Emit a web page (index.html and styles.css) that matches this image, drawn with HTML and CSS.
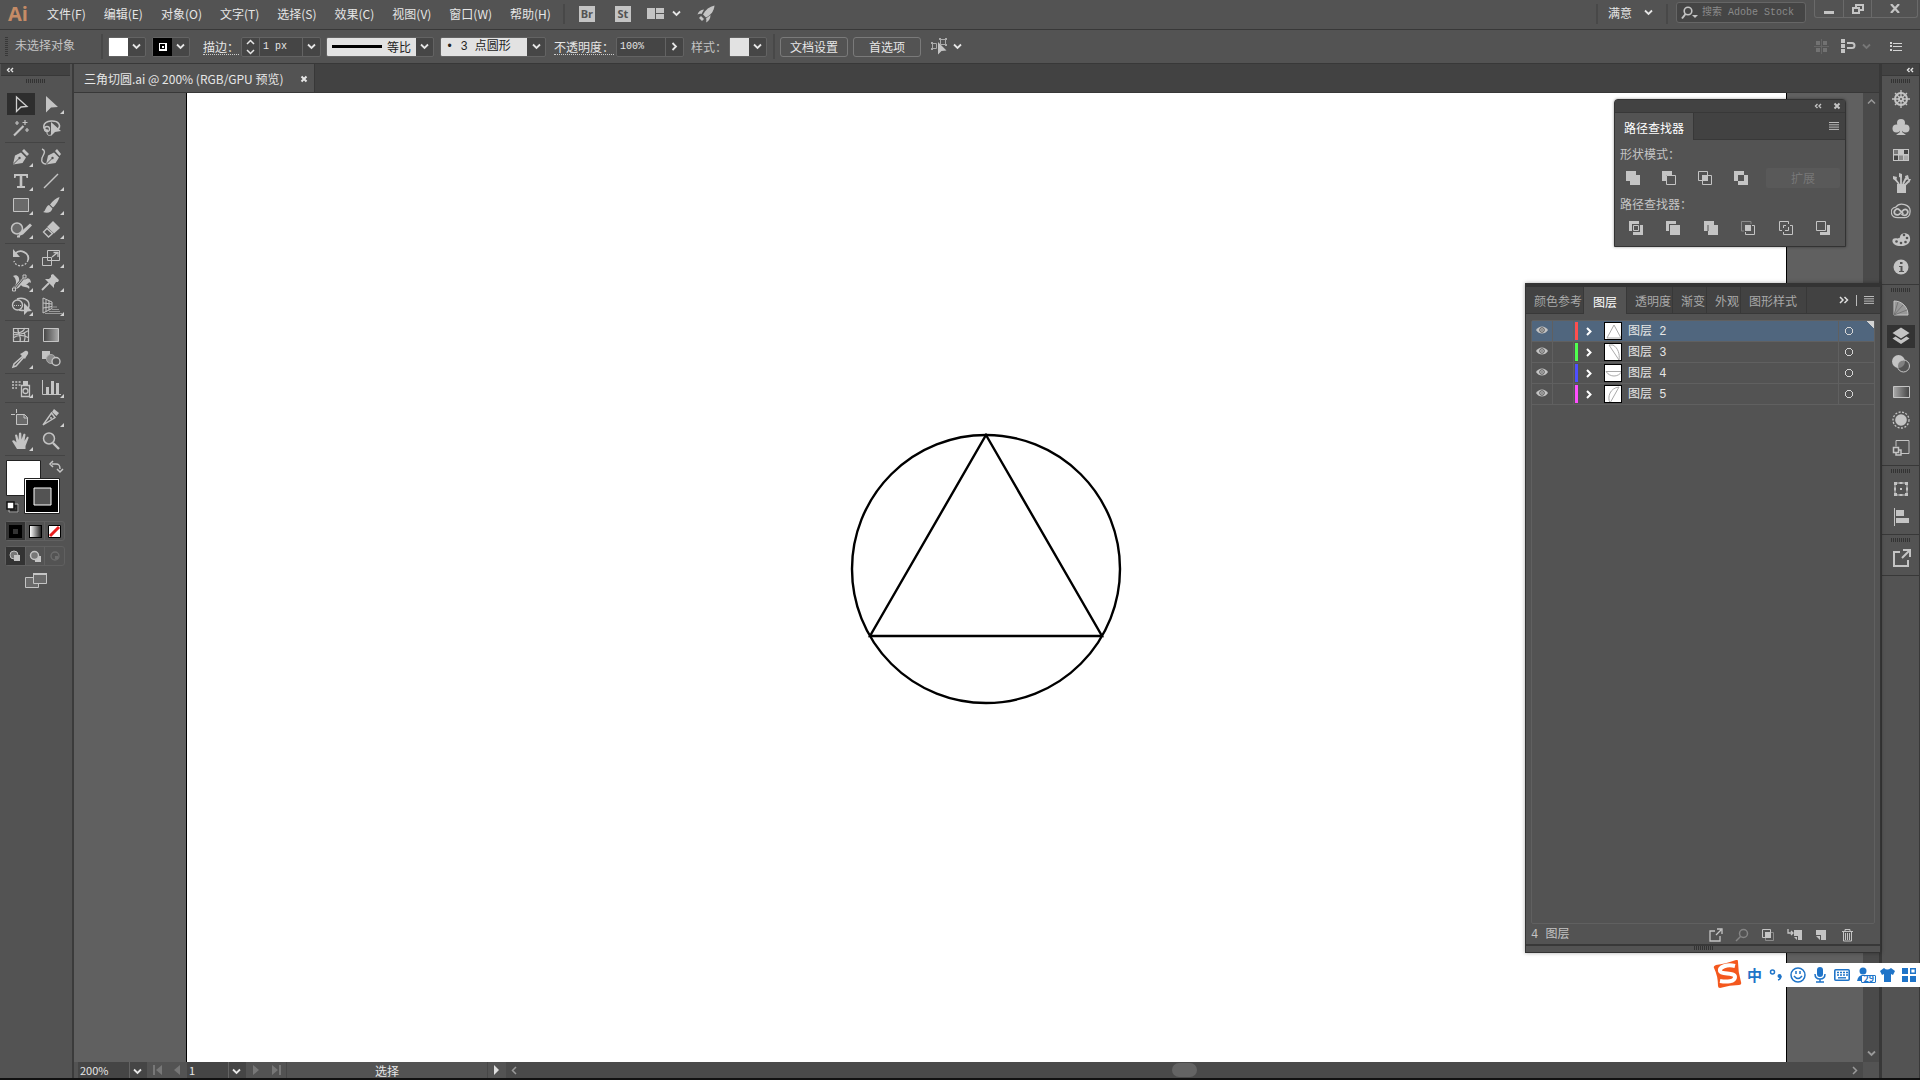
FILE: index.html
```html
<!DOCTYPE html>
<html lang="zh-CN">

<head>
    <meta charset="UTF-8">
    <meta name="viewport" content="width=device-width, initial-scale=1.0">
    <title>三角切圆.ai</title>
    <link rel="stylesheet" href="styles.css">
</head>

<body>
    <!-- shared icons -->
    <svg class="sprite" width="0" height="0">
        <symbol id="down" viewBox="0 0 9 7"><path d="M1 1.5l3.5 3.5L8 1.5" fill="none" stroke="currentColor" stroke-width="1.8"/></symbol>
        <symbol id="collapse" viewBox="0 0 8 6"><path d="M3.500 1L1.500 3l2 2M7 1L5 3l2 2" fill="none" stroke="currentColor" stroke-width="1.400"/></symbol>
        <symbol id="menu" viewBox="0 0 10 8"><path d="M0 .5h10M0 2.800h10M0 5.100h10M0 7.400h10" stroke="currentColor"/></symbol>
        <symbol id="close" viewBox="0 0 8 8"><path d="M1.500 1.500l5 5M6.500 1.500l-5 5" stroke="currentColor" stroke-width="2"/></symbol>
        <symbol id="eye" viewBox="0 0 12 8"><path d="M0 4C3-.8 9-.8 12 4 9 8.800 3 8.800 0 4z" fill="#c4c4c4"/><circle cx="6" cy="4" r="2.300" fill="#c4c4c4" stroke="#555"/><circle cx="6" cy="4" r=".8" fill="#555"/></symbol>
    </svg>

    <header class="menubar">
        <span class="logo">Ai</span>
        <nav class="menus">
            <button>文件(F)</button>
            <button>编辑(E)</button>
            <button>对象(O)</button>
            <button>文字(T)</button>
            <button>选择(S)</button>
            <button>效果(C)</button>
            <button>视图(V)</button>
            <button>窗口(W)</button>
            <button>帮助(H)</button>
        </nav>
        <span class="sep"></span>
        <div class="apps">
            <button class="app">Br</button>
            <button class="app">St</button>
            <button class="arrange" aria-label="排列文档">
                <svg width="17" height="11"><path d="M0 0h8v11H0zM9 0h8v5H9zM9 6h8v5H9z" fill="#c4c4c4"/></svg>
                <svg width="9" height="7"><use href="#down"/></svg>
            </button>
            <button aria-label="GPU 性能">
                <svg width="18" height="18" viewBox="0 0 18 18"><path d="M17.500.5c-5 1-9 4-11.500 9l3 3c5-2.500 8-6.500 8.500-12z" fill="#c4c4c4"/><path d="M7 4.500C3.500 5 1.500 6.500.5 9.500c1.500-.8 2.800-1 4-.5zM13.500 10c0 3.500-1.500 6-4.500 7.500.5-1.500.6-2.800 0-4zM4 11l3 3-2 2-3-3z" fill="#c4c4c4"/></svg>
            </button>
        </div>
        <div class="menubar-right">
            <span class="sep"></span>
            <button class="workspace-name">满意 <svg width="9" height="7"><use href="#down"/></svg></button>
            <span class="sep"></span>
            <label class="search">
                <svg width="18" height="14" viewBox="0 0 18 14"><circle cx="7" cy="5" r="3.800" fill="none" stroke="#c4c4c4" stroke-width="1.600"/><path d="M4.500 8L1 12.500" stroke="#c4c4c4" stroke-width="2"/><path d="M11 9h6l-3 3z" fill="#c4c4c4"/></svg>
                <input type="text" placeholder="搜索 Adobe Stock" aria-label="搜索 Adobe Stock">
            </label>
            <div class="window-buttons">
                <button aria-label="最小化"><svg width="10" height="12"><path d="M0 8h10v3H0z" fill="#c4c4c4"/></svg></button>
                <button aria-label="还原"><svg width="12" height="10" fill="none" stroke="#c4c4c4" stroke-width="2"><path d="M4 6V1h7v5H8"/><path d="M1 4h6v5H1z" fill="#535353"/></svg></button>
                <button aria-label="关闭"><svg width="10" height="9" viewBox="0 0 10 9"><path d="M1 0l8 9M9 0L1 9" stroke="#c4c4c4" stroke-width="2.200"/></svg></button>
            </div>
        </div>
    </header>

    <section class="controls">
        <span class="grip-v"></span>
        <span class="selection">未选择对象</span>
        <span class="sep"></span>
        <button class="swatch" aria-label="填色"><span class="chip white"></span><svg width="9" height="7"><use href="#down"/></svg></button>
        <button class="swatch" aria-label="描边颜色"><span class="chip black"></span><svg width="9" height="7"><use href="#down"/></svg></button>
        <label class="field-label dotted" for="weight">描边：</label>
        <div class="combo">
            <button class="spin" aria-label="增减"><svg width="9" height="16" fill="none" stroke="#e6e6e6" stroke-width="1.500"><path d="M1 5l3.500-3.500L8 5M1 11l3.500 3.500L8 11"/></svg></button>
            <input id="weight" class="weight" type="text" value="1 px">
            <button class="drop" aria-label="描边粗细"><svg width="9" height="7"><use href="#down"/></svg></button>
        </div>
        <select class="light profile" aria-label="宽度配置文件"><option>等比</option></select>
        <select class="light brush" aria-label="画笔定义"><option>• 3 点圆形</option></select>
        <label class="field-label dotted" for="opacity">不透明度：</label>
        <div class="combo">
            <input id="opacity" class="opacity" type="text" value="100%">
            <button class="drop" aria-label="不透明度滑块"><svg width="7" height="9" fill="none" stroke="#e6e6e6" stroke-width="1.800"><path d="M1.500 1L5 4.500 1.500 8"/></svg></button>
        </div>
        <span class="field-label">样式：</span>
        <button class="swatch" aria-label="图形样式"><span class="chip grey"></span><svg width="9" height="7"><use href="#down"/></svg></button>
        <span class="sep"></span>
        <button class="outline">文档设置</button>
        <button class="outline">首选项</button>
        <button class="similar" aria-label="选择类似的对象">
            <svg width="17" height="17" viewBox="0 0 17 17"><path d="M9.500 1.500h5v5h-5zM1.500 5.500h4v5h-4z" fill="none" stroke="#aaa"/><path d="M8 0h2v2H8zM14 0h2v2h-2zM14 6h2v2h-2zM0 4h2v2H0zM0 10h2v2H0z" fill="#aaa"/><path d="M7 4v12.500l3.500-3.500 5-.5z" fill="#c4c4c4"/></svg>
            <svg width="9" height="7"><use href="#down"/></svg>
        </button>
        <div class="controls-right">
            <svg width="15" height="15" fill="#727272"><path d="M2 2h4v4H2zM9 2h4v4H9zM2 9h4v4H2zM9 9h4v4H9z"/><path d="M7 0h1v15H7zM0 7h15v1H0z" fill="#666"/></svg>
            <svg width="15" height="15"><path d="M0 0h4v4H0zM0 5h4v4H0zM0 10h4v4H0z" fill="#c4c4c4"/><path d="M6 4h5a2.500 2.500 0 0 1 0 5H6" fill="none" stroke="#c4c4c4" stroke-width="2"/></svg>
            <svg class="dim" width="9" height="7"><use href="#down"/></svg>
            <svg class="list-icon" width="12" height="9"><path d="M0 0h2v2H0zM0 3h2v2H0zM0 7h2v2H0zM3 1h9v1H3zM3 4h9v1H3zM3 8h9v1H3z" fill="#d4d4d4"/></svg>
        </div>
    </section>

    <main class="workspace">
        <aside class="toolbar">
            <div class="dock-head left"><svg width="8" height="6"><use href="#collapse"/></svg></div>
            <span class="grip"></span>
            <div class="tools">
                <button class="tool active" aria-label="选择工具"><svg viewBox="0 0 31 24"><path d="M11.500 5v14.500l4.500-4.500 6-.5z" fill="none" stroke="#d0d0d0" stroke-width="1.300"/></svg></button>
                <button class="tool more" aria-label="直接选择工具"><svg viewBox="0 0 31 24"><path d="M10 4v16.500l5-5 7-.5z" fill="#c4c4c4"/></svg></button>
                <button class="tool" aria-label="魔棒工具"><svg viewBox="0 0 31 24"><path d="M9 19.500L18.500 10" stroke="#c4c4c4" stroke-width="2.200"/><path d="M12 5v4M10 7h4M20 4v5M17.500 6.500h5M22 12v4M20 14h4" stroke="#c4c4c4" stroke-width="1.200"/></svg></button>
                <button class="tool" aria-label="套索工具"><svg viewBox="0 0 31 24"><path d="M12 15c-6-2-6-9 3-10 8-.5 11 5 6 9" fill="none" stroke="#c4c4c4" stroke-width="1.600"/><circle cx="11" cy="13" r="2.500" fill="none" stroke="#c4c4c4" stroke-width="1.300"/><path d="M11 13v4c0 2 2 3 4 2" fill="none" stroke="#c4c4c4"/><path d="M15 6v14l4-4 6-1z" fill="#c4c4c4"/></svg></button>
                <hr>
                <button class="tool more" aria-label="钢笔工具"><svg viewBox="0 0 31 24"><path d="M8 19.500l2-9 6-3 5 5-3.500 5.500zM17 6l2-2 5 5-2 2z" fill="#c4c4c4"/><path d="M8 19.500l6-6" stroke="#535353"/><circle cx="14.500" cy="13" r="1.200" fill="#535353"/></svg></button>
                <button class="tool" aria-label="曲率工具"><svg viewBox="0 0 31 24"><path d="M10 19.500l2-9 6-3 5 5-3.500 5.500zM19 6l2-2 4 5-1.500 2z" fill="#c4c4c4"/><path d="M10 19.500l6-6" stroke="#535353"/><circle cx="16.500" cy="13" r="1.200" fill="#535353"/><path d="M6 4c5 2 1 6 0 9-1 4 1 6 4 6" fill="none" stroke="#c4c4c4" stroke-width="1.400"/></svg></button>
                <button class="tool more" aria-label="文字工具"><svg viewBox="0 0 31 24"><path d="M9 5h14v4h-1.500l-.5-2h-3.700v10H20v2h-8v-2h2.700V7H11l-.5 2H9z" fill="#c4c4c4"/></svg></button>
                <button class="tool more" aria-label="直线段工具"><svg viewBox="0 0 31 24"><path d="M8 19L22 5" stroke="#c4c4c4" stroke-width="1.500"/></svg></button>
                <button class="tool more" aria-label="矩形工具"><svg viewBox="0 0 31 24"><path d="M8.500 5.500h15v13h-15z" fill="#6a6a6a" stroke="#c4c4c4"/></svg></button>
                <button class="tool more" aria-label="画笔工具"><svg viewBox="0 0 31 24"><path d="M23.500 4c-3 1-7 4-9.500 7.500l3 3C20 12 23 7 23.500 4zM13 12l3.500 3.500c-1 4-5 5-9.500 3.500 3-1 2.500-6 6-7z" fill="#c4c4c4"/></svg></button>
                <button class="tool more" aria-label="Shaper 工具"><svg viewBox="0 0 31 24"><circle cx="12" cy="11.500" r="5.500" fill="#6a6a6a" stroke="#c4c4c4" stroke-width="1.500"/><path d="M25 6.500l2 2-9 9-5 2 2-4z" fill="#c4c4c4"/><path d="M12 19.500h3" stroke="#c4c4c4" stroke-width="2"/></svg></button>
                <button class="tool more" aria-label="橡皮擦工具"><svg viewBox="0 0 31 24"><path d="M17 4l7 7-6 5.500-7-6.500z" fill="#c4c4c4"/><path d="M11 11.500L7.500 15l5 5 4-3.500z" fill="none" stroke="#c4c4c4" stroke-width="1.400"/></svg></button>
                <hr>
                <button class="tool more" aria-label="旋转工具"><svg viewBox="0 0 31 24"><path d="M10 8c5-6 15-1 13 6" fill="none" stroke="#c4c4c4" stroke-width="1.800"/><path d="M8 3v8h7z" fill="#c4c4c4"/><path d="M23 14c-2 7-12 8-14 1" fill="none" stroke="#c4c4c4" stroke-width="1.400" stroke-dasharray="2 1.500"/></svg></button>
                <button class="tool more" aria-label="比例缩放工具"><svg viewBox="0 0 31 24"><path d="M11.500 4.500h12v10h-12zM6.500 11.500h9v8h-9z" fill="none" stroke="#c4c4c4"/><path d="M16 11l5-4M17.500 6.500H22V11" fill="none" stroke="#c4c4c4" stroke-width="1.300"/></svg></button>
                <button class="tool more" aria-label="宽度工具"><svg viewBox="0 0 31 24"><path d="M8 6c4-2 7 1 6 6 3-7 5-1 7-3 3-2 5 1 5 4-2-2-3 1-5 2 3 0 4 2 3 4-2-3-6-1-8-4-2 4-6 5-8 2 4-1 4-8 0-11z" fill="#c4c4c4"/><path d="M9 19L19 7" stroke="#535353" stroke-width="2.600"/><path d="M9 19L19 7" stroke="#c4c4c4"/><path d="M7.500 18h3v3h-3zM18 5h3v3h-3z" fill="#535353" stroke="#c4c4c4"/></svg></button>
                <button class="tool more" aria-label="操控变形工具"><svg viewBox="0 0 31 24"><path d="M15 5l2-1 6 6-1 2h-2l-2 3v3l-9-9h4l2-2z" fill="#c4c4c4"/><path d="M13 13l-7 7" stroke="#c4c4c4" stroke-width="1.800"/></svg></button>
                <button class="tool more" aria-label="形状生成器工具"><svg viewBox="0 0 31 24"><circle cx="12.500" cy="11" r="5" fill="none" stroke="#c4c4c4" stroke-width="1.400"/><path d="M12 5c5-2 12 0 12 6s-5 6-10 5" fill="none" stroke="#c4c4c4" stroke-width="1.400"/><path d="M9 11.500h10" stroke="#c4c4c4" stroke-dasharray="1 1"/><path d="M19 9v12l3.500-3.500 4.500-.5z" fill="#c4c4c4"/></svg></button>
                <button class="tool more" aria-label="透视网格工具"><svg viewBox="0 0 31 24"><path d="M7 4v15l9-4.500V8zM10 5.500v12M13 7v9M7 9l9 1M7 14l9-1.500" fill="none" stroke="#c4c4c4"/><path d="M17 13h4M16 15.500h7M13 17.500h11M9 19.500h17" stroke="#999"/></svg></button>
                <hr>
                <button class="tool" aria-label="网格工具"><svg viewBox="0 0 31 24"><path d="M8.500 5.500h15v13h-15zM8 9c6 2 10 0 12-4M8 15c6-4 11-3 16 0M13 5c-1 5 4 8 2 14M8 12l7-1c4 0 6-2 9-4M19 10c2 2 1 6 0 9" fill="none" stroke="#c4c4c4" stroke-width="1.200"/></svg></button>
                <button class="tool" aria-label="渐变工具"><svg viewBox="0 0 31 24"><defs><linearGradient id="fade"><stop offset="0" stop-color="#444"/><stop offset="1" stop-color="#aaa"/></linearGradient></defs><path d="M7.500 5.500h15v13h-15z" fill="url(#fade)" stroke="#c4c4c4"/></svg></button>
                <button class="tool more" aria-label="吸管工具"><svg viewBox="0 0 31 24"><path d="M18 9l-9 8-1 3 3-1 8-9" fill="none" stroke="#c4c4c4" stroke-width="1.500"/><path d="M15 7l2-1 3-2c2-1 4 1 3 3l-2 3-1 2z" fill="#c4c4c4"/></svg></button>
                <button class="tool" aria-label="混合工具"><svg viewBox="0 0 31 24"><path d="M6 4h8v8H6z" fill="#c4c4c4"/><circle cx="15" cy="12" r="4.500" fill="#8a8a8a" stroke="#aaa"/><circle cx="20" cy="14.500" r="4" fill="#535353" stroke="#c4c4c4" stroke-width="1.400"/></svg></button>
                <hr>
                <button class="tool more" aria-label="符号喷枪工具"><svg viewBox="0 0 31 24"><path d="M16.500 9.500h8v11h-8z" fill="none" stroke="#c4c4c4" stroke-width="1.300"/><path d="M18 5h5v4h-5z" fill="#c4c4c4"/><circle cx="20.500" cy="15" r="2.500" fill="none" stroke="#c4c4c4" stroke-width="1.300"/><path d="M7 6h9M7 9h9M7 12h5" stroke="#c4c4c4" stroke-width="1.600" stroke-dasharray="2 1.300"/></svg></button>
                <button class="tool more" aria-label="柱形图工具"><svg viewBox="0 0 31 24"><path d="M6.500 4v14.500H25" fill="none" stroke="#c4c4c4"/><path d="M10 11h3v7h-3zM15 5h3v13h-3zM20 7h3v11h-3z" fill="#c4c4c4"/></svg></button>
                <hr>
                <button class="tool" aria-label="画板工具"><svg viewBox="0 0 31 24"><path d="M11.500 9.500h8l3 3v7h-11z" fill="#6a6a6a" stroke="#c4c4c4"/><path d="M6 9.500h4M11.500 4v4M19 9v4h4" fill="none" stroke="#c4c4c4"/></svg></button>
                <button class="tool more" aria-label="切片工具"><svg viewBox="0 0 31 24"><path d="M18 4l5 4-2.500 3-4.500-4z" fill="#c4c4c4"/><path d="M15.500 8L7 20l12-7.500z" fill="none" stroke="#c4c4c4" stroke-width="1.400"/><circle cx="15" cy="13" r="1" fill="#c4c4c4"/></svg></button>
                <button class="tool more" aria-label="抓手工具"><svg viewBox="0 0 31 24"><path d="M12 20l-5-8c1-1 2-1 3 0l1.500 1.500L10 6c1-1 2-.5 2.300.5L13.500 11 14 4c1-1 2-.6 2.300.4l.2 6L18.500 5c1-.8 2-.2 2 .8L19.500 12l2.500-4c1-.5 1.900.1 1.500 1.200L20.500 17v3z" fill="#c4c4c4"/></svg></button>
                <button class="tool" aria-label="缩放工具"><svg viewBox="0 0 31 24"><circle cx="13" cy="9.500" r="5.500" fill="#626262" stroke="#c4c4c4" stroke-width="1.500"/><path d="M17 14l6 6" stroke="#c4c4c4" stroke-width="2.400"/></svg></button>
                <hr>
            </div>
            <svg class="fill-stroke" width="62" height="59" viewBox="0 0 62 59">
                <path d="M2.500 2.500h34v35h-34z" fill="#fff" stroke="#222"/>
                <path d="M20.500 20.500h35v35h-35z" fill="#fff" stroke="#222"/>
                <path d="M22 22h32v32H22z"/>
                <path d="M30 30h17v17H30z" fill="#535353" stroke="#fff"/>
                <path d="M48 6h4c3 0 4 1 4 5M49 3l-3 3 3 3M53 11l3 3 3-3" fill="none" stroke="#c4c4c4" stroke-width="1.500"/>
                <path d="M7 48h6v5H7z" fill="none" stroke="#222" stroke-width="3"/>
                <path d="M5 46h9v8H5z" fill="none" stroke="#aaa"/>
                <path d="M3 44h7v7H3z" fill="#fff" stroke="#111" stroke-width="1.500"/>
            </svg>
            <div class="modes">
                <button class="on" aria-label="颜色"><svg width="13" height="13"><path d="M2 2h9v9H2z" fill="#333" stroke="#000" stroke-width="4"/></svg></button>
                <button aria-label="渐变"><span class="mode-gradient"></span></button>
                <button aria-label="无"><svg width="13" height="13"><path d="M.5.5h12v12H.5z" fill="#fff" stroke="#000"/><path d="M2 11l9-9" stroke="#e81e1e" stroke-width="3"/></svg></button>
            </div>
            <div class="modes">
                <button class="on" aria-label="正常绘图"><svg width="12" height="12"><circle cx="5" cy="5" r="4" fill="#777" stroke="#c4c4c4"/><path d="M5 5h6v6H5z" fill="#c4c4c4"/></svg></button>
                <button aria-label="背面绘图"><svg width="12" height="12"><path d="M6 6h6v6H6z" fill="#c4c4c4"/><circle cx="5.500" cy="5.500" r="4" fill="#777" stroke="#c4c4c4" stroke-width="1.500"/></svg></button>
                <button aria-label="内部绘图"><svg width="12" height="12"><circle cx="6" cy="6" r="4" fill="none" stroke="#6d6d6d" stroke-width="1.300"/><path d="M6 6h3v3H6z" fill="#6d6d6d"/></svg></button>
            </div>
            <button class="screen-mode" aria-label="更改屏幕模式"><svg width="23" height="16"><path d="M.5 4.500h13v10H.5z" fill="#6a6a6a" stroke="#c4c4c4"/><path d="M8.500 1.500h13v9h-13z" fill="#6a6a6a" stroke="#c4c4c4"/><path d="M8 1h14" stroke="#c4c4c4" stroke-width="2"/></svg></button>
        </aside>

        <section class="document">
            <div class="tabs">
                <div class="tab">三角切圆.ai @ 200% (RGB/GPU 预览)<button aria-label="关闭文档"><svg width="8" height="8"><use href="#close"/></svg></button></div>
            </div>
            <div class="canvas">
                <div class="artboard">
                    <svg width="272" height="272" viewBox="0 0 272 272" fill="none" stroke="#000" stroke-width="2.400">
                        <circle cx="136" cy="136" r="134"/>
                        <path d="M136 2l116 201H20z"/>
                    </svg>
                </div>
                <div class="scroll-v">
                    <svg width="9" height="7" viewBox="0 0 9 7"><path d="M1 5.500L4.500 2 8 5.500" fill="none" stroke="#999" stroke-width="1.500"/></svg>
                    <svg class="scroll-down" width="9" height="7"><use href="#down"/></svg>
                </div>
            </div>
            <footer class="status">
                <select class="zoom" aria-label="缩放"><option>200%</option></select>
                <button class="nav" aria-label="首项"><svg width="9" height="10"><path d="M0 0h2v10H0zM9 0v10L3 5z"/></svg></button>
                <button class="nav" aria-label="上一项"><svg width="6" height="10"><path d="M6 0v10L0 5z"/></svg></button>
                <select class="page" aria-label="画板"><option>1</option></select>
                <button class="nav" aria-label="下一项"><svg width="6" height="10"><path d="M0 0v10l6-5z"/></svg></button>
                <button class="nav" aria-label="末项"><svg width="9" height="10"><path d="M7 0h2v10H7zM0 0v10l6-5z"/></svg></button>
                <span class="current-tool">选择</span>
                <button class="status-more" aria-label="显示"><svg width="6" height="10"><path d="M0 0v10l5-5z" fill="#ddd"/></svg></button>
                <div class="scroll-h">
                    <svg width="6" height="9" fill="none" stroke="#999" stroke-width="1.500"><path d="M5 1L1.500 4.500 5 8"/></svg>
                    <span class="thumb"></span>
                    <svg width="6" height="9" fill="none" stroke="#999" stroke-width="1.500"><path d="M1 1l3.500 3.500L1 8"/></svg>
                </div>
                <span class="corner"></span>
            </footer>
        </section>

        <aside class="dock">
            <div class="dock-head right"><svg width="8" height="6"><use href="#collapse"/></svg></div>
            <div class="dock-group">
                <span class="grip"></span>
                <button aria-label="颜色"><svg viewBox="0 0 20 20" fill="none" stroke="#c4c4c4"><circle cx="10" cy="10" r="6" stroke-width="2"/><circle cx="10" cy="10" r="2.500" fill="#c4c4c4"/><path d="M10 1v18M1 10h18M4 4l12 12M16 4L4 16" stroke-width="1.300"/><circle cx="10" cy="10" r="1" fill="#535353" stroke="none"/></svg></button>
                <button aria-label="符号"><svg viewBox="0 0 20 20" fill="#c4c4c4"><circle cx="10" cy="6" r="4"/><circle cx="5.500" cy="11.500" r="4"/><circle cx="14.500" cy="11.500" r="4"/><path d="M9 9h2v6l4 3H5l4-3z"/></svg></button>
                <button aria-label="色板"><svg viewBox="0 0 20 20"><path d="M2 4h16v12H2z" fill="#c4c4c4"/><path d="M3 5h4v4H3z" fill="#777"/><path d="M13 5h4v4h-4zM3 10.500h4V15H3z" fill="#444"/><path d="M8 10.500h4V15H8z" fill="#888"/><path d="M13 10.500h4V15h-4z" fill="#aaa"/></svg></button>
                <button aria-label="画笔"><svg viewBox="0 0 20 20" fill="#c4c4c4"><path d="M6 11h9v9H6z"/><path d="M8 11L4 6M10 11V4M12 11l3-6M14 12l4-4" stroke="#c4c4c4" stroke-width="1.800"/><path d="M2 3l4 1-1 4-3-2zM8 0l3 1v4L8 4zM14 3l3-1 1 4-3 1zM17 6h3l-2 4z"/></svg></button>
                <button aria-label="Creative Cloud"><svg viewBox="0 0 21 20" fill="none" stroke="#c4c4c4"><path d="M7 17C-1 17-2 7 5 6c4-6 16-3 15 5 0 4-3 6-6 6z" stroke-width="1.300"/><path d="M13 13L9 9c-3-3-7 1-5 4 2 2 5 1 6-1l3-3c3-2 6 1 4 4-1 2-4 2-6 0" stroke-width="1.800"/></svg></button>
                <button aria-label="颜色参考"><svg viewBox="0 0 20 20"><path d="M9 8c0-4 6-5 9-2 3 5 0 11-8 11-7 0-10-4-8-7 2-2 6 1 7-2z" fill="#c4c4c4"/><g fill="#535353"><circle cx="13" cy="6" r="1.300"/><circle cx="16" cy="9" r="1.300"/><circle cx="14.500" cy="13" r="1.300"/><circle cx="10" cy="14" r="1.300"/><circle cx="5.500" cy="12.500" r="1.300"/></g></svg></button>
                <button aria-label="信息"><svg viewBox="0 0 20 20"><circle cx="10" cy="10" r="7.500" fill="#c4c4c4"/><path d="M9 5h2.500v2H9zM8 9h3.500v5H13v1H8v-1h1.500v-4H8z" fill="#535353"/></svg></button>
            </div>
            <div class="dock-group">
                <span class="grip"></span>
                <button aria-label="颜色主题"><svg viewBox="0 0 20 20"><path d="M3 3c8 0 14 6 14 14H3z" fill="#999" stroke="#c4c4c4"/><path d="M3 17L7 4M3 17l9-10M3 17l13-5" stroke="#777"/></svg></button>
                <button class="on" aria-label="图层"><svg viewBox="0 0 20 20" fill="#c4c4c4"><path d="M10 1.500l8.500 5.500-8.500 5.500L1.500 7z"/><path d="M1.500 12.500L4.500 10.500l5.500 3.500 5.500-3.500 3 2-8.500 5.500z"/></svg></button>
                <button aria-label="透明度"><svg viewBox="0 0 20 20"><circle cx="7.500" cy="7.500" r="6.500" fill="#c4c4c4"/><circle cx="12.500" cy="12" r="6" fill="#555" fill-opacity=".6" stroke="#c4c4c4"/></svg></button>
                <button aria-label="渐变"><svg viewBox="0 0 20 20"><path d="M2.500 4.500h16v11h-16z" fill="url(#fade)" stroke="#c4c4c4" transform="matrix(-1 0 0 1 21 0)"/></svg></button>
                <button aria-label="外观"><svg viewBox="0 0 20 20"><circle cx="10" cy="10" r="5.800" fill="#c4c4c4"/><circle cx="10" cy="10" r="8" fill="none" stroke="#c4c4c4" stroke-width="1.300" stroke-dasharray="2 1.500"/></svg></button>
                <button aria-label="图形样式"><svg viewBox="0 0 20 20" fill="none" stroke="#c4c4c4"><path d="M5 8.500v-6h13v13h-8"/><path d="M2.500 9.500h5v5h-5zM8 12h2v5H5v-2" stroke-width="1.500"/></svg></button>
            </div>
            <div class="dock-group">
                <span class="grip"></span>
                <button aria-label="变换"><svg viewBox="0 0 20 20"><path d="M4 4h12v12H4z" fill="none" stroke="#c4c4c4"/><path d="M3 3h3v3H3zM14 3h3v3h-3zM3 14h3v3H3zM14 14h3v3h-3zM8.500 3h3v2h-3zM8.500 15h3v2h-3zM3 8.500h2v3H3zM15 8.500h2v3h-2zM9 9h2v2H9z" fill="#c4c4c4"/></svg></button>
                <button aria-label="对齐"><svg viewBox="0 0 20 20" fill="#c4c4c4"><path d="M3 1h1v18H3zM5 3h8v6H5zM5 11h13v5H5z"/></svg></button>
            </div>
            <div class="dock-group">
                <span class="grip"></span>
                <button aria-label="资源导出"><svg viewBox="0 0 20 20" fill="none" stroke="#c4c4c4" stroke-width="2"><path d="M9 4H3v14h14v-6M11 10l7-7M12 2h7v7"/></svg></button>
            </div>
        </aside>

        <!-- pathfinder panel -->
        <section class="panel pathfinder">
            <div class="panel-head"><svg width="8" height="6"><use href="#collapse"/></svg><svg width="8" height="8"><use href="#close"/></svg></div>
            <div class="panel-tabs">
                <button class="panel-tab active">路径查找器</button>
                <button class="panel-menu" aria-label="面板菜单"><svg width="10" height="8"><use href="#menu"/></svg></button>
            </div>
            <h2>形状模式：</h2>
            <div class="shape-modes">
                <button aria-label="联集"><svg width="14" height="14"><path d="M0 0h10v4h4v10H4v-4H0z" fill="#c4c4c4"/></svg></button>
                <button aria-label="减去顶层"><svg width="14" height="14"><path d="M0 0h10v4H4v6H0z" fill="#c4c4c4"/><path d="M4.500 4.500h9v9h-9z" fill="none" stroke="#c4c4c4"/></svg></button>
                <button aria-label="交集"><svg width="14" height="14"><path d="M.5.5h9v9h-9zM4.500 4.500h9v9h-9z" fill="none" stroke="#c4c4c4"/><path d="M4 4h6v6H4z" fill="#c4c4c4"/></svg></button>
                <button aria-label="差集"><svg width="14" height="14"><path d="M0 0h10v4h4v10H4v-4H0zM4 4v6h6V4z" fill="#c4c4c4" fill-rule="evenodd"/></svg></button>
                <button class="expand" disabled>扩展</button>
            </div>
            <h2>路径查找器：</h2>
            <div class="path-modes">
                <button aria-label="分割"><svg width="14" height="14"><path d="M0 0h10v3H3v7H0zM14 4v10H4v-3h7V4z" fill="#c4c4c4"/><path d="M4.500 4.500h5v5h-5z" fill="none" stroke="#c4c4c4"/></svg></button>
                <button aria-label="修边"><svg width="14" height="14"><path d="M0 0h10v3H3v7H0zM4 4h10v10H4z" fill="#c4c4c4"/></svg></button>
                <button aria-label="合并"><svg width="14" height="14"><path d="M0 0h10v4h4v10H4v-4H0z" fill="#c4c4c4"/><path d="M4 10V4" stroke="#535353"/></svg></button>
                <button aria-label="裁剪"><svg width="14" height="14"><path d="M10 3V.5H.5V10H3" fill="none" stroke="#8a8a8a"/><path d="M11 4.500h2.500v9h-9V11" fill="none" stroke="#c4c4c4"/><path d="M4 4h6v6H4z" fill="#c4c4c4"/></svg></button>
                <button aria-label="轮廓"><svg width="14" height="14" fill="none" stroke="#c4c4c4"><path d="M9.500 3V.5h-9v9H3M4.500 7V4.500H7M9.500 6v3.500H6M11 4.500h2.500v9h-9V11"/></svg></button>
                <button aria-label="减去后方对象"><svg width="14" height="14"><path d="M11 4h3v10H4v-3h7z" fill="#c4c4c4"/><path d="M.5.5h9v9h-9z" fill="none" stroke="#c4c4c4"/></svg></button>
            </div>
        </section>

        <!-- layers panel -->
        <section class="panel layers">
            <div class="panel-tabs">
                <button class="panel-tab">颜色参考</button>
                <button class="panel-tab active">图层</button>
                <button class="panel-tab">透明度</button>
                <button class="panel-tab">渐变</button>
                <button class="panel-tab">外观</button>
                <button class="panel-tab last">图形样式</button>
                <div class="panel-menu split">
                    <svg width="10" height="8" fill="none" stroke="#ddd" stroke-width="1.500"><path d="M1 1l3 3-3 3M5.500 1l3 3-3 3"/></svg>
                    <span class="bar"></span>
                    <svg width="10" height="8"><use href="#menu"/></svg>
                </div>
            </div>
            <ul class="layer-list">
                <li class="layer selected">
                    <span class="cell"><svg width="12" height="8"><use href="#eye"/></svg></span><span class="cell"></span><span class="color red"></span>
                    <svg class="open" width="6" height="9"><path d="M1 1l3.500 3.500L1 8"/></svg>
                    <svg class="thumbnail" width="18" height="18"><path d="M9 2l7 13H2z"/></svg>
                    <span class="name">图层 2</span><span class="target"></span>
                </li>
                <li class="layer">
                    <span class="cell"><svg width="12" height="8"><use href="#eye"/></svg></span><span class="cell"></span><span class="color green"></span>
                    <svg class="open" width="6" height="9"><path d="M1 1l3.500 3.500L1 8"/></svg>
                    <svg class="thumbnail" width="18" height="18"><path d="M4 1l10 15c1-6-1-12-6-15z"/></svg>
                    <span class="name">图层 3</span><span class="target"></span>
                </li>
                <li class="layer">
                    <span class="cell"><svg width="12" height="8"><use href="#eye"/></svg></span><span class="cell"></span><span class="color blue"></span>
                    <svg class="open" width="6" height="9"><path d="M1 1l3.500 3.500L1 8"/></svg>
                    <svg class="thumbnail" width="18" height="18"><path d="M1 6.500h16c-4 6-12 6-16 0z"/></svg>
                    <span class="name">图层 4</span><span class="target"></span>
                </li>
                <li class="layer">
                    <span class="cell"><svg width="12" height="8"><use href="#eye"/></svg></span><span class="cell"></span><span class="color pink"></span>
                    <svg class="open" width="6" height="9"><path d="M1 1l3.500 3.500L1 8"/></svg>
                    <svg class="thumbnail" width="18" height="18"><path d="M14 1L5 17C2 11 5 2 14 1z"/></svg>
                    <span class="name">图层 5</span><span class="target"></span>
                </li>
            </ul>
            <div class="layer-foot">
                <span>4 图层</span>
                <div class="layer-actions">
                    <button aria-label="收集以导出"><svg width="14" height="14" fill="none" stroke="#c4c4c4" stroke-width="1.300"><path d="M6 3H1v10h10V8M7 7l5-5M8 1h5v5"/></svg></button>
                    <button aria-label="定位对象"><svg width="14" height="14" fill="none" stroke="#858585" stroke-width="1.500"><circle cx="8.500" cy="5.500" r="4"/><path d="M5.500 8.500L1 13"/></svg></button>
                    <button aria-label="建立剪切蒙版"><svg width="14" height="14"><path d="M4.500 4.500h8v8h-8z" fill="none" stroke="#8a8a8a"/><path d="M1.500 1.500h8v8h-8z" fill="none" stroke="#c4c4c4"/><path d="M4 4h6v6H4z" fill="#c4c4c4"/></svg></button>
                    <button aria-label="创建新子图层"><svg width="15" height="14"><path d="M1 1v4h5M4 3l2 2-2 2" fill="none" stroke="#c4c4c4" stroke-width="1.300"/><path d="M7 2h8v10h-4V8H7zM7 9h3v3z" fill="#c4c4c4"/></svg></button>
                    <button aria-label="创建新图层"><svg width="14" height="14"><path d="M2 2h10v10H7V7H2zM2 8h4v4z" fill="#c4c4c4"/></svg></button>
                    <button aria-label="删除所选图层"><svg width="14" height="14" fill="none" stroke="#c4c4c4"><path d="M2 3.500h11M5 3V1.500h5V3M3.500 4v9h8V4M5.500 5v7M7.500 5v7M9.500 5v7"/></svg></button>
                </div>
            </div>
            <div class="resize"><span class="grip"></span></div>
        </section>

        <!-- input method bar -->
        <div class="ime">
            <svg class="ime-logo" width="29" height="28" viewBox="0 0 29 28"><path d="M3 5Q12 4 23 0q2-1 2 2 0 10 3 20 1 3-2 3-9 0-19 3-2 0-2-2Q5 16 1 8q-1-2 2-3z" fill="#f4581e"/><path d="M22 6C14 4 6 7 7 11s15 1 15 6-9 5-15 4" fill="none" stroke="#fff" stroke-width="4"/></svg>
            <button class="ime-lang">中</button>
            <button aria-label="标点"><svg width="14" height="14"><circle cx="3.500" cy="4" r="2" fill="none" stroke="#1f74c8" stroke-width="1.500"/><circle cx="10.500" cy="8" r="2" fill="#1f74c8"/><path d="M12 8q0 3-3 4" fill="none" stroke="#1f74c8" stroke-width="1.500"/></svg></button>
            <button aria-label="表情"><svg width="16" height="16" fill="none" stroke="#1f74c8" stroke-width="1.500"><circle cx="8" cy="8" r="7"/><path d="M4 9q4 5 8 0M6 4v3M10 4v3"/></svg></button>
            <button aria-label="语音"><svg width="14" height="16"><rect x="4" width="6" height="10" rx="3" fill="#1f74c8"/><path d="M2 7q0 5 5 5t5-5M7 12v3M3 15h8" fill="none" stroke="#1f74c8" stroke-width="1.500"/></svg></button>
            <button aria-label="软键盘"><svg width="16" height="14"><rect x=".8" y="1.800" width="14.400" height="10.400" rx="1" fill="#fff" stroke="#1f74c8" stroke-width="1.600"/><path d="M3 4.500h11M3 7h11" stroke="#1f74c8" stroke-width="1.600" stroke-dasharray="2 1"/><path d="M4 9.800h8" stroke="#1f74c8" stroke-width="1.400"/></svg></button>
            <button class="ime-user" aria-label="账户"><svg width="16" height="16" fill="#1f74c8"><circle cx="6" cy="4" r="3.500"/><path d="M0 14q1-6 6-6t6 6z"/></svg><span class="ime-badge">29</span></button>
            <button aria-label="皮肤"><svg width="15" height="14"><path d="M4 0q3 3 7 0l4 3-2 4-2-1v8H4V6L2 7 0 3z" fill="#1f74c8"/></svg></button>
            <button aria-label="工具箱"><svg width="14" height="14" fill="#1f74c8"><path d="M0 0h6v6H0zM0 8h6v6H0zM8 8h6v6H8z"/><path d="M8.700.7h4.600v4.600H8.700z" fill="none" stroke="#1f74c8" stroke-width="1.400"/></svg></button>
        </div>
    </main>
</body>

</html>
```

FILE: styles.css
```css
* {
    box-sizing: border-box;
}

body {
    margin: 0;
    height: 100vh;
    display: flex;
    flex-direction: column;
    overflow: hidden;
    background: #535353;
    border-bottom: 2px solid #111;
    color: #e6e6e6;
    font: 12px/16px "Noto Sans CJK SC", sans-serif;
}

.sprite {
    position: absolute;
}

svg {
    display: block;
    flex: none;
}

button,
input,
select {
    margin: 0;
    padding: 0;
    border: 0;
    background: none;
    color: inherit;
    font: inherit;
    border-radius: 0;
}

button {
    flex: none;
    display: flex;
    align-items: center;
    justify-content: center;
}

select {
    appearance: none;
}

.sep {
    width: 2px;
    height: 20px;
    background: #484848;
}

/* menu bar */
.menubar {
    flex: none;
    height: 30px;
    display: flex;
    align-items: center;
    padding: 0 0 2px 8px;
    border-bottom: 1px solid #383838;
}

.logo {
    width: 39px;
    color: #c58b66;
    font: bold 20px/24px "Open Sans", sans-serif;
}

.menus {
    display: flex;
    gap: 18px;
    margin-right: 12px;
}

.apps {
    display: flex;
    align-items: center;
    margin-left: 14px;
}

.app {
    width: 16px;
    height: 16px;
    margin-right: 20px;
    background: #c4c4c4;
    color: #535353;
    font: bold 11px/16px "Open Sans", sans-serif;
}

.arrange {
    gap: 8px;
    margin: 0 16px 0 -4px;
}

.menubar-right {
    display: flex;
    align-items: center;
    align-self: stretch;
    margin-left: auto;
}

.workspace-name {
    gap: 12px;
    margin: 0 13px 2px 10px;
}

.search {
    display: flex;
    align-items: center;
    width: 130px;
    height: 21px;
    margin: 0 8px 2px;
    padding-left: 4px;
    background: #454545;
    border: 1px solid #666;
    border-radius: 3px;
}

.search input {
    width: 100px;
    margin-left: 3px;
    font: 10px/16px "Liberation Mono", "Noto Sans CJK SC", monospace;
}

.search input::placeholder {
    color: #8a8a8a;
}

.window-buttons {
    display: flex;
    align-self: flex-start;
    height: 18px;
    margin-right: 2px;
    border: 1px solid #6a6a6a;
    border-top: 0;
    border-radius: 0 0 3px 3px;
}

.window-buttons button {
    width: 28px;
}

.window-buttons button + button {
    border-left: 1px solid #6a6a6a;
}

.window-buttons button:last-child {
    width: 46px;
}

/* control bar */
.controls {
    flex: none;
    height: 34px;
    display: flex;
    align-items: center;
    padding-left: 5px;
    border-bottom: 1px solid #383838;
}

.controls > .sep {
    height: 25px;
    margin-right: 5px;
}

.grip-v {
    width: 3px;
    height: 19px;
    background: repeating-linear-gradient(#383838 0 1px, transparent 1px 2px);
}

.selection {
    width: 86px;
    margin: 0 0 3px 7px;
    color: #c4c4c4;
}

.swatch {
    height: 20px;
    width: 38px;
    margin-right: 6px;
    justify-content: flex-start;
    gap: 4px;
    background: #464646;
    border: 1px solid #636363;
    border-radius: 2px;
}

.chip {
    width: 19px;
    height: 18px;
}

.white {
    background: #fff;
}

.grey {
    background: #e2e2e2;
}

.black {
    background: linear-gradient(#fff, #fff) center / 2px 2px no-repeat, linear-gradient(#000, #000) center / 5px 5px no-repeat, linear-gradient(#fff, #fff) center / 8px 8px no-repeat, #000;
}

.field-label {
    flex: none;
    height: 16px;
    margin: 0 2px;
    color: #c4c4c4;
    overflow: hidden;
}

.swatch + .field-label {
    margin-left: 7px;
}

.field-label.dotted {
    color: #e6e6e6;
    border-bottom: 1px dotted #ccc;
}

.combo {
    display: flex;
    height: 20px;
    margin-right: 5px;
    background: #454545;
    border: 1px solid #636363;
    border-radius: 2px;
}

.combo input {
    padding-left: 3px;
    border-right: 1px solid #636363;
    font: 10px/16px "Liberation Mono", monospace;
}

.spin {
    width: 18px;
    border-right: 1px solid #636363;
}

.drop {
    width: 17px;
}

.weight {
    width: 43px;
}

.opacity {
    width: 49px;
}

.light {
    height: 20px;
    margin-right: 6px;
    border: 1px solid #636363;
    border-radius: 2px;
    color: #222;
    background-color: #464646;
}

.profile {
    width: 108px;
    padding-left: 60px;
    background: url("data:image/svg+xml,%3Csvg xmlns='http://www.w3.org/2000/svg' width='9' height='7'%3E%3Cpath d='M1 1.500l3.500 3.500L8 1.500' fill='none' stroke='%23e6e6e6' stroke-width='1.800'/%3E%3C/svg%3E") right 4px center no-repeat, linear-gradient(#000, #000) 5px center / 50px 3px no-repeat, linear-gradient(90deg, #e2e2e2 89px, #464646 89px);
}

.brush {
    width: 106px;
    padding-left: 5px;
    background: url("data:image/svg+xml,%3Csvg xmlns='http://www.w3.org/2000/svg' width='9' height='7'%3E%3Cpath d='M1 1.500l3.500 3.500L8 1.500' fill='none' stroke='%23e6e6e6' stroke-width='1.800'/%3E%3C/svg%3E") right 4px center no-repeat, linear-gradient(90deg, #e2e2e2 86px, #464646 86px);
    font-family: "Liberation Mono", "Noto Sans CJK SC", monospace;
}

.outline {
    width: 68px;
    height: 20px;
    margin-right: 5px;
    border: 1px solid #7a7a7a;
    border-radius: 3px;
}

.similar {
    gap: 5px;
    margin-left: 5px;
}

.controls-right {
    display: flex;
    align-items: center;
    gap: 12px;
    margin: 0 18px 0 auto;
}

.controls-right .dim {
    margin-left: -6px;
    color: #777;
}

.list-icon {
    margin-left: 7px;
}

/* workspace */
.workspace {
    position: relative;
    flex: 1;
    min-height: 0;
    display: flex;
}

.toolbar {
    flex: none;
    width: 74px;
    padding: 0 2px 0 1px;
    border-right: 2px solid #3b3b3b;
}

.dock-head {
    height: 12px;
    display: flex;
    align-items: center;
    padding: 0 5px;
    background: #424242;
    border-bottom: 1px solid #383838;
}

.dock-head.right {
    justify-content: flex-end;
}

.grip {
    display: block;
    width: 19px;
    height: 4px;
    margin: 3px auto 2px;
    background: repeating-linear-gradient(90deg, #333 0 1px, transparent 1px 2px);
}

.tools {
    display: grid;
    grid-template-columns: 31px 31px;
    margin: 9px 0 0 4px;
}

.tools hr {
    grid-column: span 2;
    width: 60px;
    height: 1px;
    margin: 2px 0;
    border: 0;
    background: #444;
}

.tool {
    position: relative;
    height: 24px;
}

.tool svg {
    width: 31px;
    height: 24px;
}

.tool.active {
    background: linear-gradient(#2e2e2e, #2e2e2e) center / 28px 22px no-repeat;
}

.tool.more::after {
    content: "";
    position: absolute;
    right: 3px;
    bottom: 2px;
    width: 4px;
    height: 4px;
    background: #d0d0d0;
    clip-path: polygon(100% 0, 100% 100%, 0 100%);
}

.fill-stroke {
    margin: 0 0 4px 3px;
}

.modes {
    display: flex;
    width: 60px;
    height: 20px;
    margin: 0 0 5px 4px;
    border: 1px solid #606060;
    border-radius: 3px;
}

.modes button {
    flex: 1;
}

.modes button + button {
    border-left: 1px solid #606060;
}

.modes .on {
    background: #333;
}

.mode-gradient {
    width: 13px;
    height: 13px;
    border: 1px solid #000;
    background: linear-gradient(90deg, #fff, #222);
}

.screen-mode {
    margin: 7px 0 0 24px;
}

/* document window */
.document {
    flex: 1;
    min-width: 0;
    display: flex;
    flex-direction: column;
}

.tabs {
    flex: none;
    height: 29px;
    display: flex;
    background: #424242;
    border-bottom: 1px solid #383838;
}

.tab {
    display: flex;
    align-items: center;
    gap: 16px;
    padding: 2px 6px 0 10px;
    background: #535353;
    border-right: 1px solid #383838;
}

.canvas {
    flex: 1;
    min-height: 0;
    display: flex;
    background: #606060;
}

.artboard {
    flex: 1;
    display: flex;
    align-items: center;
    justify-content: center;
    margin: 0 76px 0 112px;
    padding: 0 2px 18px 0;
    background: #fff;
    border: solid #000;
    border-width: 0 1px;
}

.scroll-v {
    width: 16px;
    display: flex;
    flex-direction: column;
    justify-content: space-between;
    align-items: center;
    padding: 5px 0;
    background: #4a4a4a;
}

.scroll-down {
    color: #999;
}

.status {
    flex: none;
    height: 16px;
    display: flex;
    align-items: center;
    padding-left: 4px;
    line-height: 14px;
}

.status select {
    align-self: stretch;
    padding-left: 2px;
    background: url("data:image/svg+xml,%3Csvg xmlns='http://www.w3.org/2000/svg' width='9' height='7'%3E%3Cpath d='M1 1.500l3.500 3.500L8 1.500' fill='none' stroke='%23e6e6e6' stroke-width='1.800'/%3E%3C/svg%3E") right 5px bottom 3px no-repeat, linear-gradient(#636363, #636363) right 17px center / 1px 100% no-repeat #454545;
    font-size: 11px;
}

.zoom {
    width: 69px;
}

.page {
    width: 59px;
}

.nav {
    width: 20px;
    fill: #777;
}

.current-tool {
    align-self: stretch;
    width: 202px;
    padding-top: 2px;
    text-align: center;
    border: solid #474747;
    border-width: 0 1px;
}

.status-more {
    width: 18px;
}

.scroll-h {
    align-self: stretch;
    flex: 1;
    display: flex;
    align-items: center;
    justify-content: space-between;
    padding: 0 5px;
    background: #4a4a4a;
}

.thumb {
    width: 25px;
    height: 14px;
    border-radius: 7px;
    background: #646464;
}

.corner {
    width: 16px;
}

/* right dock */
.dock {
    flex: none;
    width: 41px;
    border: solid #383838;
    border-width: 0 1px 0 3px;
}

.dock-group {
    display: flex;
    flex-direction: column;
    align-items: center;
    padding-bottom: 3px;
    border-bottom: 1px solid #383838;
}

.dock-group button {
    width: 29px;
    height: 28px;
}

.dock-group svg {
    width: 20px;
    height: 20px;
}

.dock-group .on {
    background: linear-gradient(#333, #333) center / 28px 23px no-repeat;
}

/* floating panels */
.panel {
    position: absolute;
    background: #535353;
    border: 1px solid #333;
}

.panel-tabs {
    display: flex;
    height: 27px;
    background: #424242;
    border-bottom: 1px solid #383838;
}

.panel-tab {
    height: 26px;
    padding: 2px 1px 0 8px;
    color: #a8a8a8;
    border-right: 1px solid #383838;
}

.panel-tab.active {
    height: 27px;
    padding: 2px 9px 0;
    background: #535353;
    color: #fff;
}

.panel-tab.last {
    padding-right: 9px;
}

.panel-menu {
    color: #bbb;
    margin: 0 6px 0 auto;
}

.panel-menu.split {
    display: flex;
    align-items: center;
    gap: 7px;
}

.bar {
    width: 1px;
    height: 11px;
    background: #bbb;
}

.pathfinder {
    top: 35px;
    right: 74px;
    width: 232px;
    height: 148px;
    border-radius: 4px 4px 0 0;
    box-shadow: 0 0 3px #0006;
}

.panel-head {
    display: flex;
    align-items: center;
    justify-content: flex-end;
    gap: 11px;
    height: 13px;
    padding-right: 4px;
    background: #424242;
    border-bottom: 1px solid #383838;
    color: #c4c4c4;
}

.pathfinder h2 {
    margin: 6px 0 6px 5px;
    font-size: 12px;
    line-height: 16px;
    font-weight: normal;
    color: #c4c4c4;
}

.shape-modes {
    display: flex;
    height: 20px;
    margin-bottom: 8px;
}

.shape-modes button {
    width: 36px;
}

.shape-modes .expand {
    width: 74px;
    margin-left: 7px;
    border-radius: 2px;
    background: #595959;
    color: #777;
}

.path-modes {
    display: grid;
    grid-template-columns: repeat(6, 1fr);
    height: 20px;
    padding: 0 3px 0 2px;
}

.layers {
    display: flex;
    flex-direction: column;
    top: 219px;
    right: 39px;
    bottom: 125px;
    width: 356px;
    border-top-width: 4px;
    box-shadow: 0 0 4px #0005;
}

.layer-list {
    flex: 1;
    margin: 6px 5px 0;
    padding: 0;
    list-style: none;
    border: 1px solid #606060;
    border-radius: 2px;
}

.layer {
    display: flex;
    align-items: center;
    height: 21px;
    border-bottom: 1px solid #606060;
}

.layer.selected {
    background: linear-gradient(225deg, #d4d4d4 5px, transparent 5px), #50667e;
}

.cell {
    width: 21px;
    align-self: stretch;
    padding: 5px 0 0 4px;
    border-right: 1px solid #606060;
}

.color {
    width: 3px;
    height: 18px;
    margin: 0 8px 0 1px;
}

.red {
    background: #ff4f4f;
}

.green {
    background: #4fff4f;
}

.blue {
    background: #4f4fff;
}

.pink {
    background: #ff4fff;
}

.open {
    fill: none;
    stroke: #fff;
    stroke-width: 2;
    margin-right: 12px;
}

.thumbnail {
    background: #fff;
    border: 1px solid #000;
    fill: none;
    stroke: #aaa;
}

.name {
    flex: 1;
    margin-left: 6px;
    padding-top: 2px;
}

.name,
.layer-foot {
    font-family: "Liberation Mono", "Noto Sans CJK SC", monospace;
}

.target {
    width: 36px;
    align-self: stretch;
    border-left: 1px solid #606060;
    background: radial-gradient(circle 4px at 10px 10px, transparent 3px, #d4d4d4 3px 4px, transparent 4px);
}

.layer-foot {
    display: flex;
    align-items: center;
    justify-content: space-between;
    height: 20px;
    padding: 2px 26px 0 5px;
    color: #c4c4c4;
}

.layer-actions {
    display: flex;
    gap: 12px;
}

.resize {
    height: 8px;
    border-top: 2px solid #383838;
}

.resize .grip {
    margin-top: 0;
}

/* input method bar */
.ime {
    position: absolute;
    right: 0;
    bottom: 91px;
    display: flex;
    align-items: center;
    gap: 7px;
    height: 24px;
    padding-right: 4px;
    background: linear-gradient(90deg, transparent 14px, #fff 14px);
    color: #1f74c8;
}

.ime-logo {
    margin: -3px -2px 0 0;
}

.ime-lang {
    font-size: 15px;
    font-weight: bold;
}

.ime-user {
    position: relative;
}

.ime-badge {
    position: absolute;
    right: -3px;
    bottom: 0;
    padding: 0 1px;
    border: 1px solid #1f74c8;
    border-radius: 1px;
    background: #fff;
    font-size: 9px;
    font-weight: bold;
    line-height: 6px;
}
```
